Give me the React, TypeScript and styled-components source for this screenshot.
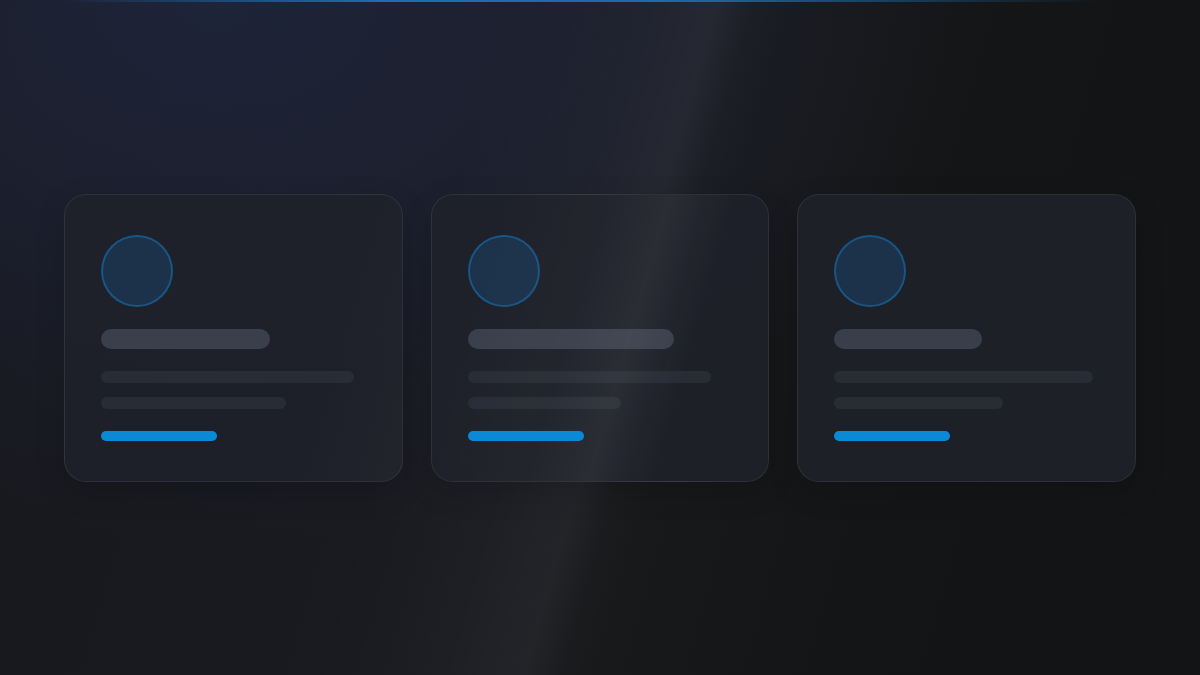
import styled, { createGlobalStyle } from "styled-components"

type Skeleton = {
  id: number
  shine: number
  title: number
  line1: number
  line2: number
  action: number
}

// shine = where the light streak crosses the card (percent along its gradient)
const cards: Skeleton[] = [
  { id: 1, shine: 115, title: 169, line1: 253, line2: 185, action: 116 },
  { id: 2, shine: 57, title: 206, line1: 243, line2: 153, action: 116 },
  { id: 3, shine: 160, title: 148, line1: 259, line2: 169, action: 116 },
]

const App = () => {
  return (
    <>
      <GlobalStyle />
      <Page>
        <Grid>
          {cards.map((card) => (
            <Card key={card.id} $shine={card.shine}>
              <Avatar />
              <TitleBar $w={card.title} />
              <Lines>
                <TextLine $w={card.line1} />
                <TextLine $w={card.line2} />
              </Lines>
              <ActionBar $w={card.action} />
            </Card>
          ))}
        </Grid>
      </Page>
    </>
  )
}

export default App

const GlobalStyle = createGlobalStyle`
  * { box-sizing: border-box; }
  html, body {
    margin: 0;
    padding: 0;
    background: #17181c;
    font-family: Inter, "Liberation Sans", sans-serif;
  }
`

const Page = styled.div`
  width: 100%;
  min-height: 100vh;
  display: flex;
  align-items: center;
  justify-content: center;
  background:
    linear-gradient(90deg, rgba(27, 130, 208, 0) 5%, rgba(27, 130, 208, 0.8) 32%, rgba(27, 130, 208, 0.75) 55%, rgba(27, 130, 208, 0) 92%) top / 100% 2px no-repeat,
    linear-gradient(106deg, rgba(255, 255, 255, 0) 36%, rgba(255, 255, 255, 0.02) 46%, rgba(255, 255, 255, 0.045) 51.5%, rgba(255, 255, 255, 0.01) 54%, rgba(255, 255, 255, 0) 57%),
    radial-gradient(ellipse 62% 80% at 18% 0%, rgba(31, 38, 62, 0.85) 0%, rgba(31, 38, 62, 0.45) 50%, rgba(31, 38, 62, 0) 100%),
    linear-gradient(106deg, #17181c 0%, #1a1b20 50%, #18191b 55%, #141516 75%, #131415 100%);
`

const Grid = styled.div`
  width: 1072px;
  display: grid;
  grid-template-columns: repeat(3, 1fr);
  gap: 28px;
`

const Card = styled.div<{ $shine: number }>`
  display: flex;
  flex-direction: column;
  align-items: flex-start;
  padding: 40px 36px;
  border-radius: 22px;
  border: 1px solid rgba(255, 255, 255, 0.075);
  background:
    linear-gradient(
      106deg,
      rgba(255, 255, 255, 0) ${(p) => p.$shine - 40}%,
      rgba(255, 255, 255, 0.02) ${(p) => p.$shine - 15}%,
      rgba(255, 255, 255, 0.05) ${(p) => p.$shine}%,
      rgba(255, 255, 255, 0) ${(p) => p.$shine + 16}%
    ),
    rgba(31, 33, 42, 0.9);
  box-shadow: 0 10px 30px rgba(0, 0, 0, 0.15);
`

const Avatar = styled.div`
  width: 72px;
  height: 72px;
  border-radius: 50%;
  border: 2px solid rgba(22, 110, 175, 0.6);
  background: rgba(22, 105, 175, 0.25);
`

const TitleBar = styled.div<{ $w: number }>`
  width: ${(p) => p.$w}px;
  height: 20px;
  margin-top: 22px;
  border-radius: 10px;
  background: rgba(148, 163, 184, 0.24);
`

const Lines = styled.div`
  display: flex;
  flex-direction: column;
  gap: 14px;
  margin-top: 22px;
`

const TextLine = styled.div<{ $w: number }>`
  width: ${(p) => p.$w}px;
  height: 12px;
  border-radius: 6px;
  background: rgba(148, 163, 184, 0.09);
`

const ActionBar = styled.div<{ $w: number }>`
  width: ${(p) => p.$w}px;
  height: 10px;
  margin-top: 22px;
  border-radius: 5px;
  background: #0a8ad6;
`
